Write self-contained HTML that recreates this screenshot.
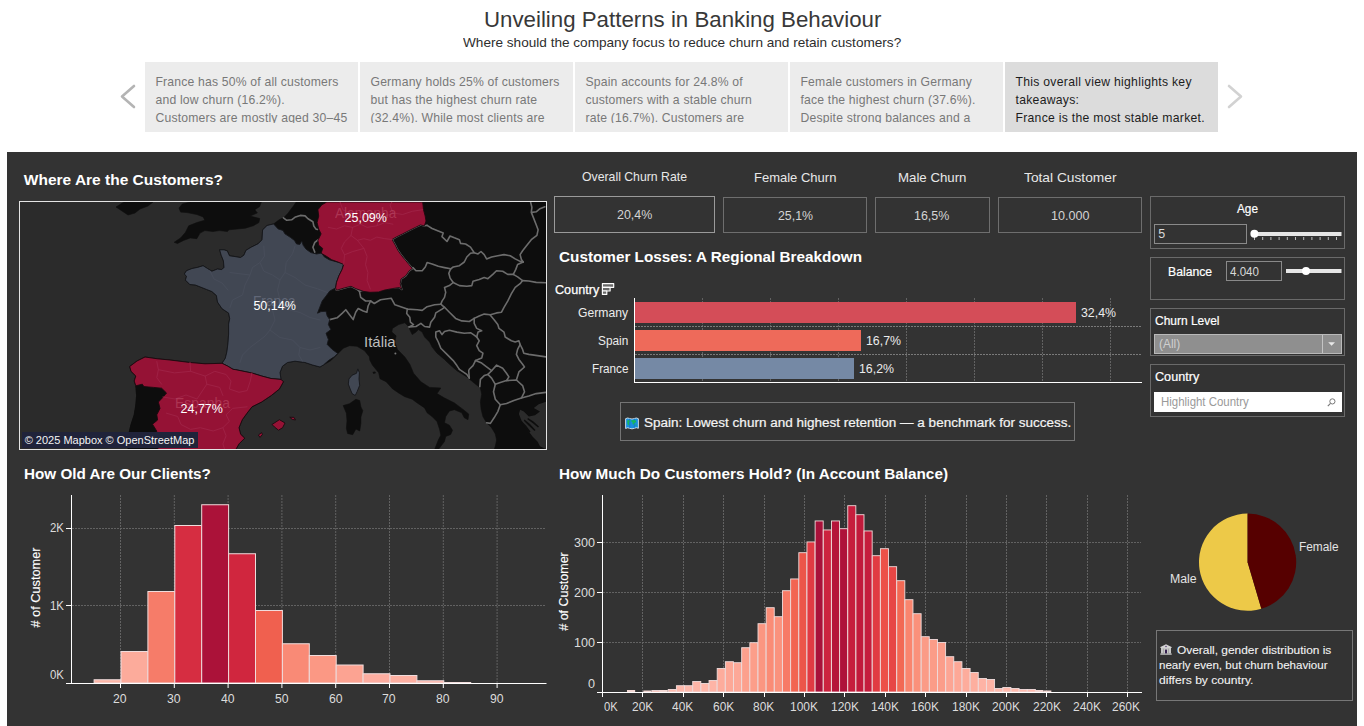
<!DOCTYPE html>
<html lang="en"><head><meta charset="utf-8"><title>Unveiling Patterns in Banking Behaviour</title>
<style>
html,body{margin:0;padding:0}
body{width:1364px;height:726px;position:relative;overflow:hidden;background:#fff;font-family:"Liberation Sans",sans-serif}
.abs{position:absolute}
.t{position:absolute;white-space:nowrap;line-height:1;margin:0}
.story{position:absolute;top:62px;width:213px;height:69.5px;background:#ececec;overflow:hidden;color:#787878}
.story.act{background:#dcdcdc;color:#1c1c1c}
.story .sl{position:absolute;left:10.5px;white-space:nowrap;font-size:12.2px;line-height:1;letter-spacing:0.18px}
.story:before{content:"";position:absolute;left:0;right:0;top:60.5px;height:9px;background:inherit;z-index:2}
#dash{position:absolute;left:7px;top:152px;width:1350px;height:574px;background:#333}
.box{position:absolute;box-sizing:border-box;border:1px solid #707070}
</style></head>
<body>
<div class="t" style="font-size:22px;color:#383838;left:483.70px;top:9.00px;transform:scaleX(1.0121);transform-origin:0 0;">Unveiling Patterns in Banking Behaviour</div>
<div class="t" style="font-size:13.3px;color:#2e2e2e;left:462.80px;top:36.00px;transform:scaleX(1.0222);transform-origin:0 0;">Where should the company focus to reduce churn and retain customers?</div>
<svg class="abs" style="left:116px;top:80px" width="24" height="34" viewBox="116 80 24 34"><path d="M134 86 L122 96.5 L134 107" fill="none" stroke="#b4b4b4" stroke-width="2.6" stroke-linecap="round" stroke-linejoin="round"/></svg>
<svg class="abs" style="left:1222px;top:80px" width="24" height="34" viewBox="1222 80 24 34"><path d="M1229 86 L1241 96.5 L1229 107" fill="none" stroke="#d2d2d2" stroke-width="2.6" stroke-linecap="round" stroke-linejoin="round"/></svg>
<div class="story" style="left:145px">
<div class="sl" style="top:14.00px">France has 50% of all customers</div>
<div class="sl" style="top:32.00px">and low churn (16.2%).</div>
<div class="sl" style="top:50.00px">Customers are mostly aged 30–45</div>
</div>
<div class="story" style="left:360px">
<div class="sl" style="top:14.00px">Germany holds 25% of customers</div>
<div class="sl" style="top:32.00px">but has the highest churn rate</div>
<div class="sl" style="top:50.00px">(32.4%). While most clients are</div>
</div>
<div class="story" style="left:575px">
<div class="sl" style="top:14.00px">Spain accounts for 24.8% of</div>
<div class="sl" style="top:32.00px">customers with a stable churn</div>
<div class="sl" style="top:50.00px">rate (16.7%). Customers are</div>
</div>
<div class="story" style="left:790px">
<div class="sl" style="top:14.00px">Female customers in Germany</div>
<div class="sl" style="top:32.00px">face the highest churn (37.6%).</div>
<div class="sl" style="top:50.00px">Despite strong balances and a</div>
</div>
<div class="story act" style="left:1005px">
<div class="sl" style="top:14.00px;letter-spacing:0.28px">This overall view highlights key</div>
<div class="sl" style="top:32.00px;letter-spacing:0.28px">takeaways:</div>
<div class="sl" style="top:50.00px;letter-spacing:0.28px">France is the most stable market.</div>
</div>
<div id="dash"></div>
<div class="t" style="font-size:15.5px;color:#ffffff;font-weight:700;left:23.80px;top:172.00px;">Where Are the Customers?</div>
<div class="abs" style="left:19px;top:201px;width:528px;height:249px;box-sizing:border-box;border:1px solid #e4e4e4;background:#2b2b2b;overflow:hidden">
<svg class="abs" style="left:-1px;top:-1px" width="528" height="250" viewBox="19 201 528 250">
<g fill="#0d0d0d" stroke="#0d0d0d" stroke-width="0.6" stroke-linejoin="round">
<polygon points="296.5,201.5 546.5,201.5 546.5,449.5 494.1,449.5 495.3,446.3 496.6,440.1 495.3,433.9 491.6,427.7 486.6,422.8 482.9,416.6 481.1,409.1 480.4,401.7 481.7,394.2 480.4,388.0 474.2,383.1 466.8,376.9 456.9,370.7 452.0,366.5 447.0,362.0 444.5,359.4 437.0,353.2 432.1,347.0 429.6,342.0 424.6,337.0 422.2,332.1 418.4,329.6 416.0,332.1 412.2,334.6 409.8,329.6 409.1,326.9 404.8,322.8 398.6,324.6 392.4,328.4 391.8,332.1 396.1,335.8 394.9,342.0 397.4,349.4 404.8,356.9 409.8,364.3 412.2,369.9 413.5,373.2 420.9,381.8 429.6,387.4 440.8,388.0 437.0,393.6 444.5,398.0 454.4,402.9 464.3,410.4 468.7,414.1 468.0,419.7 464.3,417.8 461.8,412.8 454.4,409.7 449.4,411.0 445.7,416.6 444.5,422.8 449.4,425.2 452.5,430.2 450.7,434.5 445.7,436.4 444.5,441.4 440.8,446.3 438.3,449.5 434.6,449.5 438.3,440.1 440.8,435.2 439.5,429.0 437.0,421.5 432.1,416.6 427.1,412.8 424.6,407.9 417.2,402.9 412.2,399.2 404.8,396.7 398.6,393.0 392.4,388.7 386.2,381.8 380.0,378.7 378.7,372.7 372.4,365.1 369.8,360.0 369.4,356.8 364.4,350.6 357.0,346.3 349.5,345.7 343.3,348.2 337.1,354.4 330.9,360.6 323.5,364.9 320.0,367.0 312.5,365.0 305.0,362.5 295.0,361.2 287.5,362.5 282.5,366.2 280.0,372.5 281.0,379.4 283.4,381.8 279.4,389.0 271.3,395.5 261.6,402.0 252.0,406.8 247.0,413.2 242.3,419.7 239.0,427.7 240.6,434.2 244.7,438.2 239.0,443.9 235.8,449.5 128.0,449.5 129.4,431.0 131.0,424.5 134.2,414.8 135.8,405.0 136.6,395.5 135.8,385.8 134.2,381.0 135.8,376.0 131.0,371.3 129.7,366.5 137.0,361.0 145.0,357.0 157.5,358.8 170.0,360.0 190.0,362.5 205.0,363.8 222.0,363.3 225.3,358.3 226.9,351.7 228.0,342.9 228.6,334.1 228.6,324.2 229.7,318.7 228.6,313.1 222.0,308.7 217.5,302.1 216.4,295.5 211.9,291.6 206.4,289.4 200.9,287.2 195.3,285.0 189.8,284.5 185.4,280.1 186.5,276.2 184.3,274.0 186.5,270.7 192.0,268.5 197.5,267.4 203.1,265.7 207.5,268.5 211.9,271.2 217.4,269.0 221.8,269.6 224.0,267.4 223.4,260.8 221.2,255.3 219.6,249.8 224.0,249.8 227.3,250.9 229.5,255.8 233.9,256.4 240.5,257.5 243.8,255.3 246.0,250.3 251.5,247.0 258.2,243.7 262.0,239.8 262.6,229.9 267.0,225.5 273.6,223.9 279.1,219.8 283.9,217.4 287.8,213.5 290.7,209.6 293.6,205.8 296.5,201.5"/>
<polygon points="179.0,208.0 182.3,204.0 190.3,202.0 261.3,202.0 259.7,206.5 254.8,209.7 257.3,212.9 250.0,216.1 259.7,218.5 258.9,222.6 253.2,225.8 245.2,228.2 237.1,229.0 229.0,229.8 227.4,231.5 219.4,230.6 212.9,231.5 204.8,230.6 200.0,233.1 196.8,238.7 190.3,237.9 183.9,240.3 177.4,243.5 174.2,242.3 180.6,237.9 185.5,232.3 188.7,225.8 196.8,222.6 204.8,220.2 203.2,216.9 196.8,214.5 187.1,212.6 180.6,212.1"/>
<polygon points="116.0,207.0 124.0,202.0 153.0,202.0 148.0,206.0 140.0,209.0 135.0,213.0 128.0,215.0 122.0,211.0"/>
<polygon points="343.2,405.6 349.5,403.7 355.9,399.3 359.7,400.5 360.9,406.9 362.8,410.7 360.9,417.0 360.9,423.3 359.7,431.0 355.9,429.0 352.7,434.7 347.6,433.5 346.4,428.4 347.0,420.8 346.4,413.2 344.5,408.8"/>
<polygon points="128.0,449.5 129.4,431.0 131.0,424.5 134.2,414.8 135.8,405.0 136.6,395.5 135.8,385.8 142.3,384.2 143.9,386.6 153.5,387.4 161.6,388.2 166.5,393.0 163.2,397.0 158.4,402.0 160.0,408.4 156.8,414.8 157.6,420.0 152.5,424.2 156.7,431.0 156.5,440.0 158.0,449.5"/>
</g>
<polygon points="546.5,401.7 538.7,404.2 533.8,407.9 540.0,411.6 535.0,415.3 528.8,416.6 523.8,411.6 520.1,409.7 518.9,414.1 521.4,420.3 525.1,426.5 528.8,431.4 532.5,436.4 537.5,441.4 540.0,446.3 546.5,449.5" fill="#2b2b2b"/>
<g fill="none" stroke="#6c6c6c" stroke-width="1.6" stroke-linejoin="round" stroke-linecap="round">
<polyline points="283.4,217.8 286.8,220.3 291.6,219.8 295.5,216.9 300.3,215.4 305.1,215.9 308.0,218.8 312.9,221.7 313.8,226.0 315.8,228.9 317.5,229.5"/>
<polyline points="318.6,239.5 314.8,242.4 312.9,247.3 314.8,252.1"/>
<polyline points="427.1,225.4 432.1,228.5 438.3,231.0 443.2,232.9 442.0,236.6 447.0,241.5 450.0,236.0 454.4,237.8 459.4,239.7 460.6,243.4 465.6,244.0 470.5,247.1 474.2,252.7 478.0,253.9 481.0,251.5 484.2,254.6 486.6,258.9 491.6,257.0 497.8,255.8 504.0,254.6 510.2,255.8 515.2,258.9 520.1,261.4 523.2,262.0"/>
<polyline points="530.7,202.5 531.9,207.4 531.3,212.4 533.8,218.6 536.2,224.8 538.1,229.8 536.9,235.3 531.3,239.7 526.3,245.9 522.6,250.8 520.1,254.6 521.4,259.5 523.2,262.0"/>
<polyline points="531.9,212.4 536.2,211.8 540.0,208.7 544.9,206.8"/>
<polyline points="474.2,252.7 470.5,253.3 466.8,257.0 464.3,262.0 459.4,265.7 453.2,267.0 450.7,268.8"/>
<polyline points="412.9,267.6 416.0,270.7 422.2,270.7 425.3,267.0 427.1,262.6 432.1,263.9 438.3,266.3 444.5,267.6 450.7,268.8"/>
<polyline points="450.7,268.8 448.8,273.2 450.1,278.1 453.2,282.5 449.4,285.6 444.5,287.4 445.7,292.4 444.5,297.4 442.0,301.1 440.8,304.2"/>
<polyline points="453.2,282.5 459.4,285.6 466.8,286.2 471.8,285.6 473.0,281.2 479.2,279.4 484.2,277.5 487.9,278.7 492.8,274.4 496.5,270.7 502.7,271.3 507.7,274.4 513.3,274.4"/>
<polyline points="523.2,262.0 517.6,264.5 515.8,269.4 513.3,274.4"/>
<polyline points="513.3,274.4 517.6,276.9 522.6,280.6 520.1,283.7 515.2,287.4 511.4,293.6 507.7,301.1 504.0,307.3 501.5,312.2 496.6,312.9 490.4,314.7 484.2,314.1 479.2,316.0 474.2,318.4"/>
<polyline points="522.6,280.6 528.8,281.0 536.2,282.4 546.0,282.8"/>
<polyline points="370.6,301.0 374.3,303.5 380.5,299.8 391.2,298.2 394.9,304.8 407.3,309.1 417.2,309.8 422.2,310.4 427.1,306.7 434.6,304.8 440.8,304.2"/>
<polyline points="440.8,304.2 444.5,307.3 449.4,312.2 455.6,318.4 461.8,320.9 469.3,321.5 474.2,318.4"/>
<polyline points="490.4,315.3 494.1,319.7 497.8,324.6 499.0,328.4 504.0,332.1 505.2,337.0 511.4,340.8 515.2,342.0 518.9,340.8 520.1,344.5"/>
<polyline points="520.1,344.5 522.6,349.4 523.8,353.2 528.8,354.4 537.5,355.6 546.0,356.9"/>
<polyline points="520.1,344.5 517.6,349.4 516.4,354.4 518.9,359.4 522.6,364.3 524.5,367.0 518.9,371.9 516.4,380.0"/>
<polyline points="407.3,309.1 406.7,313.5 409.8,317.2 410.4,322.2 413.5,324.6 409.1,326.9"/>
<polyline points="409.1,326.9 416.0,326.5 420.9,323.4 424.6,326.5 429.6,327.1 430.8,322.2 434.6,317.2 435.8,312.9 442.0,309.1 444.5,307.3"/>
<polyline points="459.4,369.4 456.9,365.6 453.2,360.6 447.0,354.4 440.8,348.2 438.3,342.0 435.8,337.0 435.8,332.1 439.5,330.8 442.0,334.6 444.5,331.5 449.4,330.2 456.9,332.1 464.3,333.3 470.5,332.7 474.2,335.2 476.7,337.0"/>
<polyline points="474.2,318.4 474.2,323.4 476.7,328.4 481.7,330.8 478.0,332.1 476.7,337.0"/>
<polyline points="476.7,337.0 479.2,340.8 476.7,345.7 479.2,350.7 482.9,353.2 481.7,358.1 475.5,360.6 473.0,365.6 469.3,369.3 468.7,370.7 469.3,378.1"/>
<polyline points="459.4,369.4 466.8,374.4 469.3,378.1"/>
<polyline points="475.5,360.6 481.7,363.1 486.6,366.8 491.6,370.7 487.9,374.4 484.2,375.6 480.4,379.4 479.8,386.8"/>
<polyline points="491.6,370.7 496.6,365.1 502.7,368.2 506.5,373.2 508.9,376.9 506.5,380.6 500.3,382.5 495.3,384.3 491.6,378.1 487.9,374.4"/>
<polyline points="495.3,384.3 493.5,391.8 495.3,399.2 500.3,404.8 497.8,411.6 494.1,417.8 490.4,423.4 486.6,422.8"/>
<polyline points="506.5,380.6 516.4,380.0 522.6,385.6 524.5,391.8 521.4,398.0 513.9,400.4 506.5,403.5 500.3,404.8"/>
<polyline points="521.4,398.0 528.8,396.1 536.2,393.6 546.0,392.4"/>
<polyline points="329.7,319.6 337.1,317.8 342.1,313.4 345.8,309.7 349.5,314.7 353.2,319.6 355.7,312.2 358.2,308.5 363.2,311.0 366.9,312.2 368.1,306.0 370.6,301.0"/>
<polyline points="359.4,291.1 360.7,297.3 365.6,301.0 370.6,301.0"/>
<polyline points="335.9,288.6 336.5,290.3 344.5,287.9 351.0,286.3 355.8,288.7 359.4,291.1"/>
<polyline points="359.4,291.1 363.9,290.3 371.9,289.0 378.4,291.1 384.8,288.7 392.9,287.9 399.4,287.1 401.8,289.5 400.2,283.9 401.0,279.0 405.8,275.8 409.0,271.0 412.3,268.5"/>
<polyline points="412.3,268.5 409.0,264.5 405.0,259.7 401.0,254.8 397.7,250.0 395.3,245.2 392.1,239.5 396.1,237.1 402.6,233.9 409.0,230.6 415.5,227.4 420.3,225.0 424.4,225.8 427.1,225.4"/>
</g>
<g fill="#0d0d0d">
<polygon points="521.5,421.0 526.0,425.5 530.5,431.5 529.5,432.5 524.5,427.5 520.8,422.5"/>
<polygon points="524.5,419.5 530.0,424.0 535.5,430.0 534.5,431.0 528.5,425.5 523.8,420.8"/>
<polygon points="528.0,418.0 533.5,421.5 539.0,426.5 538.0,427.5 532.5,423.0 527.3,419.3"/>
<polygon points="372.5,372.0 375.0,371.5 376.0,373.0 373.5,374.0"/>
</g>
<g fill="#414753" stroke="#15161a" stroke-width="0.9" stroke-linejoin="round"><polygon points="273.6,223.9 278.1,228.9 283.0,230.4 284.9,233.8 290.7,237.6 294.5,240.5 296.5,243.9 299.8,244.4 301.8,241.0 303.2,245.3 306.1,249.2 310.9,252.6 316.7,254.0 321.5,253.0 324.4,256.9 329.3,259.8 336.0,261.7 343.7,263.6 342.1,269.4 338.9,275.8 336.5,282.3 335.6,287.9 329.7,291.1 326.0,296.1 322.2,301.0 319.8,307.2 317.5,313.2 321.0,311.6 326.0,311.3 327.2,315.9 329.7,319.6 328.4,324.6 330.9,329.6 326.0,333.3 328.4,339.5 327.2,344.4 332.2,349.4 337.7,353.4 334.6,356.6 328.4,360.6 323.5,364.9 320.0,367.0 312.5,365.0 305.0,362.5 295.0,361.2 287.5,362.5 282.5,366.2 280.0,372.5 281.0,379.4 271.0,378.5 261.6,376.0 252.0,373.0 235.8,369.7 233.0,369.3 227.5,366.0 222.0,363.3 225.3,358.3 226.9,351.7 228.0,342.9 228.6,334.1 228.6,324.2 229.7,318.7 228.6,313.1 222.0,308.7 217.5,302.1 216.4,295.5 211.9,291.6 206.4,289.4 200.9,287.2 195.3,285.0 189.8,284.5 185.4,280.1 186.5,276.2 184.3,274.0 186.5,270.7 192.0,268.5 197.5,267.4 203.1,265.7 207.5,268.5 211.9,271.2 217.4,269.0 221.8,269.6 224.0,267.4 223.4,260.8 221.2,255.3 219.6,249.8 224.0,249.8 227.3,250.9 229.5,255.8 233.9,256.4 240.5,257.5 243.8,255.3 246.0,250.3 251.5,247.0 258.2,243.7 262.0,239.8 262.6,229.9 267.0,225.5"/><polygon points="357.8,368.9 359.4,372.7 359.0,379.0 359.7,385.3 357.1,391.7 355.2,395.5 352.1,393.6 350.2,389.1 348.3,384.1 348.9,379.0 352.1,375.2 356.5,373.3"/></g>
<g fill="none" stroke="#484e5b" stroke-width="0.9" stroke-linejoin="round" stroke-linecap="round">
<polyline points="263.8,246.2 264.5,256.2 260.0,262.5 263.8,271.2 272.5,275.0 280.0,280.0 285.0,272.5 286.2,262.5 292.5,253.8 295.0,246.2"/>
<polyline points="280.0,280.0 277.5,290.0 280.0,300.0 272.5,310.0 275.0,320.0 270.0,330.0 265.0,336.2 260.0,340.0"/>
<polyline points="230.0,272.5 240.0,273.8 250.0,275.0 252.5,267.5 260.0,262.5"/>
<polyline points="250.0,275.0 245.0,285.0 242.5,295.0 232.5,300.0 230.0,307.5"/>
<polyline points="285.0,272.5 295.0,277.5 305.0,285.0 317.5,288.8 327.5,292.5"/>
<polyline points="280.0,300.0 290.0,310.0 300.0,312.5 310.0,317.5 320.0,320.0"/>
<polyline points="270.0,330.0 280.0,337.5 292.5,340.0 300.0,347.5 310.0,350.0 320.0,347.5"/>
<polyline points="260.0,340.0 250.0,347.5 242.5,355.0 240.0,362.5"/>
<polyline points="300.0,347.5 298.8,355.0 302.5,361.2"/>
<polyline points="210.0,271.0 214.0,279.0 222.0,283.0 228.0,290.0"/>
</g>
<g fill="#951235" stroke="#1a0a0e" stroke-width="0.9" stroke-linejoin="round"><polygon points="326.8,202.0 321.9,204.8 317.9,209.7 318.7,216.1 317.1,222.6 318.7,229.0 321.1,233.9 317.9,240.3 318.7,245.2 322.7,248.4 321.1,253.2 326.8,256.5 331.6,259.7 338.1,262.1 343.7,264.5 342.1,269.4 338.9,275.8 336.5,282.3 335.6,287.9 336.5,290.3 344.5,287.9 351.0,286.3 355.8,288.7 363.9,291.5 370.0,292.3 378.4,292.0 384.8,290.0 392.9,288.5 399.4,287.5 401.8,289.5 400.2,283.9 401.0,279.0 405.8,275.8 409.0,271.0 412.3,268.5 409.0,264.5 405.0,259.7 401.0,254.8 397.7,250.0 395.3,245.2 392.1,239.5 396.1,237.1 402.6,233.9 409.0,230.6 415.5,227.4 420.3,225.0 424.4,225.8 426.0,221.0 425.2,216.1 423.5,209.7 422.7,202.0"/><polygon points="134.2,381.0 135.8,376.0 131.0,371.3 129.7,366.5 137.0,361.0 145.0,357.0 157.5,358.8 170.0,360.0 190.0,362.5 205.0,363.8 222.0,363.3 227.5,366.0 233.0,369.3 235.8,369.7 252.0,373.0 261.6,376.0 271.0,378.5 281.0,379.4 283.4,381.8 279.4,389.0 271.3,395.5 261.6,402.0 252.0,406.8 247.0,413.2 242.3,419.7 239.0,427.7 240.6,434.2 244.7,438.2 239.0,443.9 235.8,449.5 158.0,449.5 156.5,440.0 156.7,431.0 152.5,424.2 157.6,420.0 156.8,414.8 160.0,408.4 158.4,402.0 163.2,397.0 166.5,393.0 161.6,388.2 153.5,387.4 143.9,386.6 142.3,384.2 135.8,385.8"/><polygon points="272.0,424.5 279.4,419.7 285.0,423.0 282.6,427.7 278.5,430.2 274.5,427.0"/><polygon points="289.8,417.3 293.9,417.3 295.5,420.0 292.3,419.4"/><polygon points="258.4,435.0 261.6,432.6 262.4,434.5 260.0,437.4"/></g>
<g fill="none" stroke="#9f2346" stroke-width="0.9" stroke-linejoin="round" stroke-linecap="round">
<polyline points="328.4,227.4 336.5,229.0 344.5,225.8 352.6,227.4 360.6,224.2 367.1,227.4 376.8,225.8 384.8,222.6 392.9,224.2"/>
<polyline points="352.6,227.4 351.0,235.5 344.5,241.9 341.3,248.4 344.5,254.8 343.7,264.5"/>
<polyline points="351.0,235.5 357.4,240.3 363.9,238.7 370.3,240.3 376.8,237.1 384.8,238.7 392.1,239.5"/>
<polyline points="363.9,248.4 367.1,256.5 365.5,264.5 367.9,272.6 367.1,280.6 370.3,289.0"/>
<polyline points="344.5,254.8 352.6,251.6 363.9,248.4 357.4,240.3"/>
<polyline points="392.9,212.9 402.6,214.5 412.3,211.3 422.7,209.7"/>
<polyline points="376.8,225.8 380.0,217.7 389.7,214.5 392.9,212.9 390.0,205.0 392.0,202.0"/>
<polyline points="340.0,202.0 343.0,210.0 352.0,213.0 360.6,224.2"/>
<polyline points="156.8,361.6 158.4,369.7 156.8,377.7 161.6,384.2"/>
<polyline points="158.4,369.7 174.5,372.9 190.6,371.3 205.2,376.1 206.8,384.2 219.7,387.4 222.9,395.5"/>
<polyline points="205.2,376.1 214.8,371.3 226.1,374.5 231.0,381.0 229.4,389.0 239.0,392.3 247.1,390.6 250.3,381.0 251.9,372.9"/>
<polyline points="166.5,413.2 177.7,416.5 181.0,424.5 190.6,429.4 200.3,427.7 213.2,431.0 222.9,427.7 229.4,421.3 226.1,414.8 232.6,408.4 247.1,406.8"/>
<polyline points="222.9,427.7 226.1,435.8 222.9,443.9 224.5,449.0"/>
<polyline points="163.0,397.0 175.0,399.0 186.0,395.0 197.0,399.0 206.8,384.2"/>
<polyline points="190.6,371.3 190.0,362.5"/>
</g>
<circle cx="395.4" cy="353.4" r="1" fill="#777"/>
</svg>
<div class="abs" style="left:2px;top:230px;width:176px;height:16px;background:#20233a"></div>
</div>
<div class="t" style="font-size:15px;color:#c0506b;opacity:0.55;left:334.80px;top:205.00px;transform:scaleX(0.9060);transform-origin:0 0;">Alemanha</div>
<div class="t" style="font-size:14.5px;color:#6a7080;opacity:0.8;left:253.40px;top:294.00px;transform:scaleX(0.9437);transform-origin:0 0;">França</div>
<div class="t" style="font-size:15px;color:#c0506b;opacity:0.55;left:174.50px;top:395.00px;transform:scaleX(0.9271);transform-origin:0 0;">Espanha</div>
<div class="t" style="font-size:14.5px;color:#bdbdbd;left:363.80px;top:335.00px;transform:scaleX(1.0313);transform-origin:0 0;">Itália</div>
<div class="t" style="font-size:12.5px;color:#fff;left:344.50px;top:212.00px;">25,09%</div>
<div class="t" style="font-size:12.5px;color:#fff;left:253.40px;top:300.00px;">50,14%</div>
<div class="t" style="font-size:12.5px;color:#fff;left:180.50px;top:403.00px;">24,77%</div>
<div class="t" style="font-size:11px;color:#f4f4f4;left:24.70px;top:435.00px;">© 2025 Mapbox © OpenStreetMap</div>
<div class="t" style="font-size:13px;color:#e8e8e8;left:582.00px;top:170.00px;transform:scaleX(0.9436);transform-origin:0 0;">Overall Churn Rate</div>
<div class="t" style="font-size:13px;color:#e8e8e8;left:754.00px;top:171.00px;">Female Churn</div>
<div class="t" style="font-size:13px;color:#e8e8e8;left:898.25px;top:171.00px;transform:scaleX(1.0193);transform-origin:0 0;">Male Churn</div>
<div class="t" style="font-size:13px;color:#e8e8e8;left:1023.75px;top:171.00px;transform:scaleX(1.0581);transform-origin:0 0;">Total Customer</div>
<div class="box" style="left:554px;top:196px;width:161px;height:37px;border-color:#9a9a9a;"></div>
<div class="box" style="left:723px;top:197px;width:144px;height:36px;border-color:#6e6e6e;"></div>
<div class="box" style="left:875px;top:197px;width:115px;height:36px;border-color:#6e6e6e;"></div>
<div class="box" style="left:998px;top:197px;width:144px;height:36px;border-color:#6e6e6e;"></div>
<div class="t" style="font-size:12.5px;color:#d4d4d4;left:616.50px;top:209.00px;transform:scaleX(0.9943);transform-origin:0 0;">20,4%</div>
<div class="t" style="font-size:12.5px;color:#d4d4d4;left:777.50px;top:210.00px;transform:scaleX(0.9872);transform-origin:0 0;">25,1%</div>
<div class="t" style="font-size:12.5px;color:#d4d4d4;left:914.25px;top:210.00px;transform:scaleX(0.9943);transform-origin:0 0;">16,5%</div>
<div class="t" style="font-size:12.5px;color:#d4d4d4;left:1050.50px;top:210.00px;transform:scaleX(1.0069);transform-origin:0 0;">10.000</div>
<div class="t" style="font-size:15.5px;color:#ffffff;font-weight:700;left:558.50px;top:249.00px;transform:scaleX(0.9863);transform-origin:0 0;">Customer Losses: A Regional Breakdown</div>
<div class="t" style="font-size:12.5px;color:#ffffff;-webkit-text-stroke:0.25px #ffffff;left:554.50px;top:284.00px;transform:scaleX(1.0107);transform-origin:0 0;">Country</div>
<svg class="abs" style="left:601px;top:282px" width="15" height="15" viewBox="601 282 15 15"><g fill="#6a6a6a" stroke="#fff" stroke-width="1.15" stroke-linejoin="round"><rect x="602.4" y="283.6" width="11.3" height="3.7"/><rect x="602.4" y="287.3" width="7.7" height="3.7"/><rect x="602.4" y="291" width="4.4" height="3.4"/></g></svg>
<svg class="abs" style="left:550px;top:296px" width="596" height="92" viewBox="550 296 596 92">
<line x1="702.5" y1="298" x2="702.5" y2="382" stroke="#626262" stroke-width="1" stroke-dasharray="2 1"/>
<line x1="770.5" y1="298" x2="770.5" y2="382" stroke="#626262" stroke-width="1" stroke-dasharray="2 1"/>
<line x1="838.5" y1="298" x2="838.5" y2="382" stroke="#626262" stroke-width="1" stroke-dasharray="2 1"/>
<line x1="906.5" y1="298" x2="906.5" y2="382" stroke="#626262" stroke-width="1" stroke-dasharray="2 1"/>
<line x1="974.5" y1="298" x2="974.5" y2="382" stroke="#626262" stroke-width="1" stroke-dasharray="2 1"/>
<line x1="1042.5" y1="298" x2="1042.5" y2="382" stroke="#626262" stroke-width="1" stroke-dasharray="2 1"/>
<line x1="1110.5" y1="298" x2="1110.5" y2="382" stroke="#626262" stroke-width="1" stroke-dasharray="2 1"/>
<line x1="635" y1="326.5" x2="1142" y2="326.5" stroke="#7a7a7a" stroke-width="1" stroke-dasharray="2 1"/>
<line x1="635" y1="354.5" x2="1142" y2="354.5" stroke="#7a7a7a" stroke-width="1" stroke-dasharray="2 1"/>
<rect x="635" y="302" width="441" height="21" fill="#d44d58"/>
<rect x="635" y="330" width="226" height="21" fill="#ee6a5a"/>
<rect x="635" y="358" width="219" height="21" fill="#7589a5"/>
<line x1="634.5" y1="298" x2="634.5" y2="383" stroke="#fff" stroke-width="1"/>
<line x1="634" y1="382.5" x2="1142" y2="382.5" stroke="#fff" stroke-width="1"/>
</svg>
<div class="t" style="font-size:12.5px;color:#ececec;left:578.25px;top:307.00px;transform:scaleX(0.9726);transform-origin:0 0;">Germany</div>
<div class="t" style="font-size:12.5px;color:#ececec;left:598.00px;top:335.00px;transform:scaleX(0.9458);transform-origin:0 0;">Spain</div>
<div class="t" style="font-size:12.5px;color:#ececec;left:591.75px;top:363.00px;transform:scaleX(0.9382);transform-origin:0 0;">France</div>
<div class="t" style="font-size:12.5px;color:#ececec;left:1080.50px;top:307.00px;transform:scaleX(0.9872);transform-origin:0 0;">32,4%</div>
<div class="t" style="font-size:12.5px;color:#ececec;left:865.50px;top:335.00px;transform:scaleX(0.9872);transform-origin:0 0;">16,7%</div>
<div class="t" style="font-size:12.5px;color:#ececec;left:858.50px;top:363.00px;transform:scaleX(0.9872);transform-origin:0 0;">16,2%</div>
<div class="box" style="left:620px;top:402px;width:455px;height:39px;border-color:#747474;"></div>
<svg class="abs" style="left:624.9px;top:416.6px" width="14" height="13" viewBox="0 0 14 13"><path d="M0.6 1.7 Q2.6 0.4 4.7 1.5 Q7 2.5 9.3 1.5 Q11.4 0.4 13.4 1.7 V11.3 Q11.4 10.1 9.3 11.3 Q7 12.4 4.7 11.3 Q2.6 10.1 0.6 11.5 Z" fill="#1b8fdd" stroke="#eef6fb" stroke-width="0.8" stroke-linejoin="round"/><path d="M4.7 1.6 V11.2 M9.3 1.6 V11.2" stroke="#0f6fb8" stroke-width="0.6" fill="none"/><path d="M2.2 3.6 L4 3 L4.8 4.4 L3.8 5.4 L4.2 7.4 L3.2 8.6 L2.4 6.6 Z M6 3.4 L8.6 2.9 L10.8 3.6 L11.2 5.2 L9.6 5.8 L8.6 7.8 L7.4 6.6 L7.6 5 L6.2 4.6 Z M10.4 7.6 L11.6 7.4 L11.4 8.8 L10.4 8.8 Z" fill="#16b85c"/></svg>
<div class="t" style="font-size:12.5px;color:#f4f4f4;-webkit-text-stroke:0.2px #f4f4f4;left:643.75px;top:417.00px;transform:scaleX(1.0807);transform-origin:0 0;">Spain: Lowest churn and highest retention — a benchmark for success.</div>
<div class="box" style="left:1150px;top:196px;width:195px;height:53px;border-color:#6a6a6a;"></div>
<div class="t" style="font-size:12.5px;color:#ffffff;-webkit-text-stroke:0.2px #ffffff;left:1237.20px;top:203.00px;transform:scaleX(0.9438);transform-origin:0 0;">Age</div>
<div class="box" style="left:1154px;top:224px;width:92.5px;height:20px;border-color:#8a8a8a;"></div>
<div class="t" style="font-size:12.5px;color:#d8d8d8;left:1158.20px;top:228.00px;">5</div>
<svg class="abs" style="left:1248px;top:226px" width="98" height="18" viewBox="1248 226 98 18"><rect x="1254" y="232" width="87.5" height="4" fill="#e6e6e6"/><line x1="1254.5" y1="237" x2="1254.5" y2="240" stroke="#e0e0e0" stroke-width="0.8"/><line x1="1262.7" y1="237" x2="1262.7" y2="240" stroke="#e0e0e0" stroke-width="0.8"/><line x1="1270.9" y1="237" x2="1270.9" y2="240" stroke="#e0e0e0" stroke-width="0.8"/><line x1="1279.1" y1="237" x2="1279.1" y2="240" stroke="#e0e0e0" stroke-width="0.8"/><line x1="1287.3" y1="237" x2="1287.3" y2="240" stroke="#e0e0e0" stroke-width="0.8"/><line x1="1295.5" y1="237" x2="1295.5" y2="240" stroke="#e0e0e0" stroke-width="0.8"/><line x1="1303.7" y1="237" x2="1303.7" y2="240" stroke="#e0e0e0" stroke-width="0.8"/><line x1="1311.9" y1="237" x2="1311.9" y2="240" stroke="#e0e0e0" stroke-width="0.8"/><line x1="1320.1" y1="237" x2="1320.1" y2="240" stroke="#e0e0e0" stroke-width="0.8"/><line x1="1328.3" y1="237" x2="1328.3" y2="240" stroke="#e0e0e0" stroke-width="0.8"/><line x1="1336.5" y1="237" x2="1336.5" y2="240" stroke="#e0e0e0" stroke-width="0.8"/><circle cx="1254.4" cy="233.8" r="4" fill="#fff"/></svg>
<div class="box" style="left:1150px;top:257px;width:195px;height:43px;border-color:#6a6a6a;"></div>
<div class="t" style="font-size:12.5px;color:#ffffff;-webkit-text-stroke:0.2px #ffffff;left:1168.10px;top:266.00px;transform:scaleX(0.9759);transform-origin:0 0;">Balance</div>
<div class="box" style="left:1226px;top:261px;width:56px;height:20px;border-color:#8a8a8a;"></div>
<div class="t" style="font-size:12.5px;color:#d8d8d8;left:1230.00px;top:266.00px;transform:scaleX(0.9271);transform-origin:0 0;">4.040</div>
<svg class="abs" style="left:1284px;top:264px" width="60" height="14" viewBox="1284 264 60 14"><rect x="1286" y="269" width="55.5" height="4" fill="#e6e6e6"/><circle cx="1306" cy="271" r="4" fill="#fff"/></svg>
<div class="box" style="left:1150px;top:308px;width:195px;height:48px;border-color:#6a6a6a;"></div>
<div class="t" style="font-size:12.5px;color:#ffffff;-webkit-text-stroke:0.2px #ffffff;left:1154.50px;top:315.00px;transform:scaleX(0.9569);transform-origin:0 0;">Churn Level</div>
<div class="abs" style="left:1154px;top:334px;width:187.5px;height:20px;box-sizing:border-box;background:#8f8f8f;border:1px solid #b9b9b9"></div>
<div class="abs" style="left:1322px;top:335px;width:1px;height:18px;background:#c4c4c4"></div>
<svg class="abs" style="left:1326px;top:340px" width="12" height="8" viewBox="0 0 12 8"><path d="M2.2 2.2 H9 L5.6 5.8 Z" fill="#e8e8e8"/></svg>
<div class="t" style="font-size:12.5px;color:#d0d0d0;left:1158.50px;top:338.00px;transform:scaleX(0.9541);transform-origin:0 0;">(All)</div>
<div class="box" style="left:1150px;top:364px;width:195px;height:53px;border-color:#6a6a6a;"></div>
<div class="t" style="font-size:12.5px;color:#ffffff;-webkit-text-stroke:0.2px #ffffff;left:1154.50px;top:371.00px;transform:scaleX(1.0096);transform-origin:0 0;">Country</div>
<div class="abs" style="left:1154px;top:392px;width:187.5px;height:20px;background:#fff"></div>
<div class="t" style="font-size:12px;color:#9a9a9a;left:1161.20px;top:396.00px;transform:scaleX(0.9539);transform-origin:0 0;">Highlight Country</div>
<svg class="abs" style="left:1326px;top:397px" width="11" height="11" viewBox="0 0 11 11"><circle cx="6.4" cy="4.4" r="2.6" fill="none" stroke="#777" stroke-width="1"/><path d="M4.5 6.4 L1.8 9.2" stroke="#777" stroke-width="1.1"/></svg>
<svg class="abs" style="left:1195px;top:510px" width="106" height="106" viewBox="1195 510 106 106"><path d="M1247.6 562.2 L1261.36 608.81 A48.6 48.6 0 1 1 1247.6 513.6 Z" fill="#edc948"/><path d="M1247.6 562.2 L1247.6 513.6 A48.6 48.6 0 0 1 1261.36 608.81 Z" fill="#560000"/></svg>
<div class="t" style="font-size:12.5px;color:#e4e4e4;left:1298.70px;top:541.00px;transform:scaleX(0.9499);transform-origin:0 0;">Female</div>
<div class="t" style="font-size:12.5px;color:#e4e4e4;left:1169.80px;top:573.00px;transform:scaleX(0.9855);transform-origin:0 0;">Male</div>
<div class="box" style="left:1156px;top:630px;width:197px;height:71px;border-color:#777;"></div>
<svg class="abs" style="left:1160.3px;top:644.2px" width="12" height="11" viewBox="0 0 12 11"><path d="M6 0.2 L11.6 3 V4 H0.4 V3 Z" fill="#d2d2d2"/><rect x="1" y="4" width="10" height="5.6" fill="#c6c6c6"/><rect x="0.3" y="9.4" width="11.4" height="1.4" fill="#bdbdbd"/><rect x="3.1" y="4.6" width="0.7" height="4.6" fill="#9a9a9a"/><rect x="8.2" y="4.6" width="0.7" height="4.6" fill="#9a9a9a"/><rect x="5" y="5.6" width="2" height="3.8" fill="#35204f"/><circle cx="6" cy="2.5" r="0.8" fill="#5b3f78"/></svg>
<div class="t" style="font-size:11.3px;color:#f2f2f2;-webkit-text-stroke:0.1px #f2f2f2;left:1176.70px;top:645.00px;transform:scaleX(1.0546);transform-origin:0 0;">Overall, gender distribution is</div>
<div class="t" style="font-size:11.3px;color:#f2f2f2;-webkit-text-stroke:0.1px #f2f2f2;left:1159.00px;top:660.00px;transform:scaleX(1.0246);transform-origin:0 0;">nearly even, but churn behaviour</div>
<div class="t" style="font-size:11.3px;color:#f2f2f2;-webkit-text-stroke:0.1px #f2f2f2;left:1159.00px;top:675.00px;transform:scaleX(1.0723);transform-origin:0 0;">differs by country.</div>
<div class="t" style="font-size:15.5px;color:#ffffff;font-weight:700;left:23.50px;top:466.00px;transform:scaleX(0.9845);transform-origin:0 0;">How Old Are Our Clients?</div>
<svg class="abs" style="left:14px;top:490px" width="536" height="204" viewBox="14 490 536 204">
<line x1="120.5" y1="495" x2="120.5" y2="683" stroke="#626262" stroke-width="1" stroke-dasharray="2 1"/>
<line x1="174.3" y1="495" x2="174.3" y2="683" stroke="#626262" stroke-width="1" stroke-dasharray="2 1"/>
<line x1="228.1" y1="495" x2="228.1" y2="683" stroke="#626262" stroke-width="1" stroke-dasharray="2 1"/>
<line x1="281.9" y1="495" x2="281.9" y2="683" stroke="#626262" stroke-width="1" stroke-dasharray="2 1"/>
<line x1="335.7" y1="495" x2="335.7" y2="683" stroke="#626262" stroke-width="1" stroke-dasharray="2 1"/>
<line x1="389.5" y1="495" x2="389.5" y2="683" stroke="#626262" stroke-width="1" stroke-dasharray="2 1"/>
<line x1="443.3" y1="495" x2="443.3" y2="683" stroke="#626262" stroke-width="1" stroke-dasharray="2 1"/>
<line x1="497.1" y1="495" x2="497.1" y2="683" stroke="#626262" stroke-width="1" stroke-dasharray="2 1"/>
<line x1="72" y1="528.5" x2="546" y2="528.5" stroke="#626262" stroke-width="1" stroke-dasharray="2 1"/>
<line x1="72" y1="605.5" x2="546" y2="605.5" stroke="#626262" stroke-width="1" stroke-dasharray="2 1"/>
<rect x="94.10" y="679.75" width="26.90" height="3.25" fill="#fdb6a7" stroke="#f0dcdc" stroke-width="1"/>
<rect x="121.00" y="651.50" width="26.90" height="31.50" fill="#fcab9b" stroke="#f0dcdc" stroke-width="1"/>
<rect x="147.90" y="591.50" width="26.90" height="91.50" fill="#f67c69" stroke="#f0dcdc" stroke-width="1"/>
<rect x="174.80" y="525.50" width="26.90" height="157.50" fill="#d62d41" stroke="#f0dcdc" stroke-width="1"/>
<rect x="201.70" y="504.75" width="26.90" height="178.25" fill="#ab1239" stroke="#f0dcdc" stroke-width="1"/>
<rect x="228.60" y="553.75" width="26.90" height="129.25" fill="#d0263e" stroke="#f0dcdc" stroke-width="1"/>
<rect x="255.50" y="610.50" width="26.90" height="72.50" fill="#f0604f" stroke="#f0dcdc" stroke-width="1"/>
<rect x="282.40" y="643.75" width="26.90" height="39.25" fill="#f98a76" stroke="#f0dcdc" stroke-width="1"/>
<rect x="309.30" y="655.50" width="26.90" height="27.50" fill="#fb9884" stroke="#f0dcdc" stroke-width="1"/>
<rect x="336.20" y="665.00" width="26.90" height="18.00" fill="#fca392" stroke="#f0dcdc" stroke-width="1"/>
<rect x="363.10" y="673.75" width="26.90" height="9.25" fill="#fdada0" stroke="#f0dcdc" stroke-width="1"/>
<rect x="390.00" y="675.50" width="26.90" height="7.50" fill="#fdb0a2" stroke="#f0dcdc" stroke-width="1"/>
<rect x="416.90" y="680.75" width="26.90" height="2.25" fill="#feb5a8" stroke="#f0dcdc" stroke-width="1"/>
<rect x="443.80" y="682.50" width="26.90" height="0.50" fill="#ffbcb0" stroke="#f0dcdc" stroke-width="1"/>
<line x1="71.5" y1="495" x2="71.5" y2="683.5" stroke="#fff" stroke-width="1"/>
<line x1="66" y1="683.5" x2="546.5" y2="683.5" stroke="#fff" stroke-width="1"/>
<line x1="66" y1="528.5" x2="72" y2="528.5" stroke="#fff" stroke-width="1"/>
<line x1="66" y1="605.5" x2="72" y2="605.5" stroke="#fff" stroke-width="1"/>
<line x1="120.5" y1="683" x2="120.5" y2="688" stroke="#fff" stroke-width="1"/>
<line x1="174.3" y1="683" x2="174.3" y2="688" stroke="#fff" stroke-width="1"/>
<line x1="228.1" y1="683" x2="228.1" y2="688" stroke="#fff" stroke-width="1"/>
<line x1="281.9" y1="683" x2="281.9" y2="688" stroke="#fff" stroke-width="1"/>
<line x1="335.7" y1="683" x2="335.7" y2="688" stroke="#fff" stroke-width="1"/>
<line x1="389.5" y1="683" x2="389.5" y2="688" stroke="#fff" stroke-width="1"/>
<line x1="443.3" y1="683" x2="443.3" y2="688" stroke="#fff" stroke-width="1"/>
<line x1="497.1" y1="683" x2="497.1" y2="688" stroke="#fff" stroke-width="1"/>
</svg>
<div class="t" style="font-size:12.5px;color:#dcdcdc;left:50.00px;top:522.00px;transform:scaleX(0.9152);transform-origin:0 0;">2K</div>
<div class="t" style="font-size:12.5px;color:#dcdcdc;left:50.00px;top:600.00px;transform:scaleX(0.9152);transform-origin:0 0;">1K</div>
<div class="t" style="font-size:12.5px;color:#dcdcdc;left:50.00px;top:669.00px;transform:scaleX(0.9152);transform-origin:0 0;">0K</div>
<div class="t" style="font-size:12.5px;color:#dcdcdc;left:113.40px;top:693.00px;transform:scaleX(0.9780);transform-origin:0 0;">20</div>
<div class="t" style="font-size:12.5px;color:#dcdcdc;left:167.20px;top:693.00px;transform:scaleX(0.9780);transform-origin:0 0;">30</div>
<div class="t" style="font-size:12.5px;color:#dcdcdc;left:221.00px;top:693.00px;transform:scaleX(0.9780);transform-origin:0 0;">40</div>
<div class="t" style="font-size:12.5px;color:#dcdcdc;left:274.80px;top:693.00px;transform:scaleX(0.9780);transform-origin:0 0;">50</div>
<div class="t" style="font-size:12.5px;color:#dcdcdc;left:328.60px;top:693.00px;transform:scaleX(0.9780);transform-origin:0 0;">60</div>
<div class="t" style="font-size:12.5px;color:#dcdcdc;left:382.40px;top:693.00px;transform:scaleX(0.9780);transform-origin:0 0;">70</div>
<div class="t" style="font-size:12.5px;color:#dcdcdc;left:436.20px;top:693.00px;transform:scaleX(0.9780);transform-origin:0 0;">80</div>
<div class="t" style="font-size:12.5px;color:#dcdcdc;left:490.00px;top:693.00px;transform:scaleX(0.9780);transform-origin:0 0;">90</div>
<div class="t" style="font-size:12.5px;color:#ffffff;-webkit-text-stroke:0.12px #ffffff;left:-4.26px;top:582.00px;transform:rotate(-90deg) scaleX(1.0189);transform-origin:39.26px 5.50px;"># of Customer</div>
<div class="t" style="font-size:15.5px;color:#ffffff;font-weight:700;left:558.50px;top:466.00px;transform:scaleX(0.9877);transform-origin:0 0;">How Much Do Customers Hold? (In Account Balance)</div>
<svg class="abs" style="left:550px;top:490px" width="596" height="210" viewBox="550 490 596 210">
<line x1="642.5" y1="495" x2="642.5" y2="692" stroke="#626262" stroke-width="1" stroke-dasharray="2 1"/>
<line x1="683.5" y1="495" x2="683.5" y2="692" stroke="#626262" stroke-width="1" stroke-dasharray="2 1"/>
<line x1="723.5" y1="495" x2="723.5" y2="692" stroke="#626262" stroke-width="1" stroke-dasharray="2 1"/>
<line x1="764.5" y1="495" x2="764.5" y2="692" stroke="#626262" stroke-width="1" stroke-dasharray="2 1"/>
<line x1="804.5" y1="495" x2="804.5" y2="692" stroke="#626262" stroke-width="1" stroke-dasharray="2 1"/>
<line x1="844.5" y1="495" x2="844.5" y2="692" stroke="#626262" stroke-width="1" stroke-dasharray="2 1"/>
<line x1="885.5" y1="495" x2="885.5" y2="692" stroke="#626262" stroke-width="1" stroke-dasharray="2 1"/>
<line x1="925.5" y1="495" x2="925.5" y2="692" stroke="#626262" stroke-width="1" stroke-dasharray="2 1"/>
<line x1="966.5" y1="495" x2="966.5" y2="692" stroke="#626262" stroke-width="1" stroke-dasharray="2 1"/>
<line x1="1006.5" y1="495" x2="1006.5" y2="692" stroke="#626262" stroke-width="1" stroke-dasharray="2 1"/>
<line x1="1046.5" y1="495" x2="1046.5" y2="692" stroke="#626262" stroke-width="1" stroke-dasharray="2 1"/>
<line x1="1087.5" y1="495" x2="1087.5" y2="692" stroke="#626262" stroke-width="1" stroke-dasharray="2 1"/>
<line x1="1127.5" y1="495" x2="1127.5" y2="692" stroke="#626262" stroke-width="1" stroke-dasharray="2 1"/>
<line x1="603" y1="542.5" x2="1141" y2="542.5" stroke="#626262" stroke-width="1" stroke-dasharray="2 1"/>
<line x1="603" y1="592.5" x2="1141" y2="592.5" stroke="#626262" stroke-width="1" stroke-dasharray="2 1"/>
<line x1="603" y1="642.5" x2="1141" y2="642.5" stroke="#626262" stroke-width="1" stroke-dasharray="2 1"/>
<rect x="626.98" y="690.00" width="8.16" height="2.00" fill="#f3d9d5"/>
<rect x="643.30" y="690.50" width="8.16" height="1.50" fill="#f3d9d5"/>
<rect x="651.91" y="690.45" width="8.06" height="1.55" fill="#ffbcb0" stroke="#f0dcdc" stroke-width="0.9"/>
<rect x="659.63" y="690.00" width="8.16" height="2.00" fill="#f3d9d5"/>
<rect x="668.24" y="689.45" width="8.06" height="2.55" fill="#ffbcaf" stroke="#f0dcdc" stroke-width="0.9"/>
<rect x="676.40" y="685.70" width="8.06" height="6.30" fill="#feb9ac" stroke="#f0dcdc" stroke-width="0.9"/>
<rect x="684.56" y="685.70" width="8.06" height="6.30" fill="#feb9ac" stroke="#f0dcdc" stroke-width="0.9"/>
<rect x="692.72" y="681.45" width="8.06" height="10.55" fill="#feb5a7" stroke="#f0dcdc" stroke-width="0.9"/>
<rect x="700.88" y="683.45" width="8.06" height="8.55" fill="#feb7a9" stroke="#f0dcdc" stroke-width="0.9"/>
<rect x="709.04" y="680.45" width="8.06" height="11.55" fill="#feb4a6" stroke="#f0dcdc" stroke-width="0.9"/>
<rect x="717.20" y="668.45" width="8.06" height="23.55" fill="#fdac9c" stroke="#f0dcdc" stroke-width="0.9"/>
<rect x="725.36" y="661.70" width="8.06" height="30.30" fill="#fda897" stroke="#f0dcdc" stroke-width="0.9"/>
<rect x="733.52" y="662.70" width="8.06" height="29.30" fill="#fda898" stroke="#f0dcdc" stroke-width="0.9"/>
<rect x="741.68" y="647.70" width="8.06" height="44.30" fill="#fca08d" stroke="#f0dcdc" stroke-width="0.9"/>
<rect x="749.84" y="642.70" width="8.06" height="49.30" fill="#fc9e8a" stroke="#f0dcdc" stroke-width="0.9"/>
<rect x="758.01" y="623.70" width="8.06" height="68.30" fill="#fb9681" stroke="#f0dcdc" stroke-width="0.9"/>
<rect x="766.17" y="607.70" width="8.06" height="84.30" fill="#fa8c76" stroke="#f0dcdc" stroke-width="0.9"/>
<rect x="774.33" y="616.70" width="8.06" height="75.30" fill="#fa927d" stroke="#f0dcdc" stroke-width="0.9"/>
<rect x="782.49" y="590.70" width="8.06" height="101.30" fill="#f77a66" stroke="#f0dcdc" stroke-width="0.9"/>
<rect x="790.65" y="578.95" width="8.06" height="113.05" fill="#f26552" stroke="#f0dcdc" stroke-width="0.9"/>
<rect x="798.81" y="552.70" width="8.06" height="139.30" fill="#ec5549" stroke="#f0dcdc" stroke-width="0.9"/>
<rect x="806.97" y="541.95" width="8.06" height="150.05" fill="#e03a43" stroke="#f0dcdc" stroke-width="0.9"/>
<rect x="815.13" y="520.95" width="8.06" height="171.05" fill="#a9113a" stroke="#f0dcdc" stroke-width="0.9"/>
<rect x="823.29" y="529.95" width="8.06" height="162.05" fill="#cc233f" stroke="#f0dcdc" stroke-width="0.9"/>
<rect x="831.45" y="520.95" width="8.06" height="171.05" fill="#b5153a" stroke="#f0dcdc" stroke-width="0.9"/>
<rect x="839.61" y="528.70" width="8.06" height="163.30" fill="#ae123a" stroke="#f0dcdc" stroke-width="0.9"/>
<rect x="847.77" y="505.70" width="8.06" height="186.30" fill="#c61e3d" stroke="#f0dcdc" stroke-width="0.9"/>
<rect x="855.93" y="514.70" width="8.06" height="177.30" fill="#c11a3b" stroke="#f0dcdc" stroke-width="0.9"/>
<rect x="864.10" y="530.95" width="8.06" height="161.05" fill="#c51d3c" stroke="#f0dcdc" stroke-width="0.9"/>
<rect x="872.26" y="555.70" width="8.06" height="136.30" fill="#e13b42" stroke="#f0dcdc" stroke-width="0.9"/>
<rect x="880.42" y="548.70" width="8.06" height="143.30" fill="#ec5148" stroke="#f0dcdc" stroke-width="0.9"/>
<rect x="888.58" y="566.70" width="8.06" height="125.30" fill="#e74645" stroke="#f0dcdc" stroke-width="0.9"/>
<rect x="896.74" y="580.70" width="8.06" height="111.30" fill="#f26954" stroke="#f0dcdc" stroke-width="0.9"/>
<rect x="904.90" y="599.70" width="8.06" height="92.30" fill="#f9856e" stroke="#f0dcdc" stroke-width="0.9"/>
<rect x="913.06" y="613.70" width="8.06" height="78.30" fill="#fa917b" stroke="#f0dcdc" stroke-width="0.9"/>
<rect x="921.22" y="636.70" width="8.06" height="55.30" fill="#fb9b87" stroke="#f0dcdc" stroke-width="0.9"/>
<rect x="929.38" y="639.45" width="8.06" height="52.55" fill="#fb9c88" stroke="#f0dcdc" stroke-width="0.9"/>
<rect x="937.54" y="642.45" width="8.06" height="49.55" fill="#fb9d8a" stroke="#f0dcdc" stroke-width="0.9"/>
<rect x="945.70" y="656.70" width="8.06" height="35.30" fill="#fca594" stroke="#f0dcdc" stroke-width="0.9"/>
<rect x="953.86" y="661.70" width="8.06" height="30.30" fill="#fda897" stroke="#f0dcdc" stroke-width="0.9"/>
<rect x="962.03" y="668.45" width="8.06" height="23.55" fill="#fdac9c" stroke="#f0dcdc" stroke-width="0.9"/>
<rect x="970.19" y="672.45" width="8.06" height="19.55" fill="#fdaf9f" stroke="#f0dcdc" stroke-width="0.9"/>
<rect x="978.35" y="678.45" width="8.06" height="13.55" fill="#feb3a5" stroke="#f0dcdc" stroke-width="0.9"/>
<rect x="986.51" y="679.45" width="8.06" height="12.55" fill="#feb4a6" stroke="#f0dcdc" stroke-width="0.9"/>
<rect x="994.67" y="688.45" width="8.06" height="3.55" fill="#ffbbae" stroke="#f0dcdc" stroke-width="0.9"/>
<rect x="1002.83" y="687.45" width="8.06" height="4.55" fill="#ffbaad" stroke="#f0dcdc" stroke-width="0.9"/>
<rect x="1010.99" y="688.45" width="8.06" height="3.55" fill="#ffbbae" stroke="#f0dcdc" stroke-width="0.9"/>
<rect x="1019.15" y="689.45" width="8.06" height="2.55" fill="#ffbcaf" stroke="#f0dcdc" stroke-width="0.9"/>
<rect x="1027.31" y="689.45" width="8.06" height="2.55" fill="#ffbcaf" stroke="#f0dcdc" stroke-width="0.9"/>
<rect x="1035.02" y="690.00" width="8.16" height="2.00" fill="#f3d9d5"/>
<rect x="1043.18" y="690.50" width="8.16" height="1.50" fill="#f3d9d5"/>
<line x1="602.5" y1="495" x2="602.5" y2="697" stroke="#fff" stroke-width="1"/>
<line x1="597" y1="692.5" x2="1142" y2="692.5" stroke="#fff" stroke-width="1"/>
<line x1="597" y1="542.5" x2="603" y2="542.5" stroke="#fff" stroke-width="1"/>
<line x1="597" y1="592.5" x2="603" y2="592.5" stroke="#fff" stroke-width="1"/>
<line x1="597" y1="642.5" x2="603" y2="642.5" stroke="#fff" stroke-width="1"/>
<line x1="642.5" y1="692" x2="642.5" y2="697" stroke="#fff" stroke-width="1"/>
<line x1="683.5" y1="692" x2="683.5" y2="697" stroke="#fff" stroke-width="1"/>
<line x1="723.5" y1="692" x2="723.5" y2="697" stroke="#fff" stroke-width="1"/>
<line x1="764.5" y1="692" x2="764.5" y2="697" stroke="#fff" stroke-width="1"/>
<line x1="804.5" y1="692" x2="804.5" y2="697" stroke="#fff" stroke-width="1"/>
<line x1="844.5" y1="692" x2="844.5" y2="697" stroke="#fff" stroke-width="1"/>
<line x1="885.5" y1="692" x2="885.5" y2="697" stroke="#fff" stroke-width="1"/>
<line x1="925.5" y1="692" x2="925.5" y2="697" stroke="#fff" stroke-width="1"/>
<line x1="966.5" y1="692" x2="966.5" y2="697" stroke="#fff" stroke-width="1"/>
<line x1="1006.5" y1="692" x2="1006.5" y2="697" stroke="#fff" stroke-width="1"/>
<line x1="1046.5" y1="692" x2="1046.5" y2="697" stroke="#fff" stroke-width="1"/>
<line x1="1087.5" y1="692" x2="1087.5" y2="697" stroke="#fff" stroke-width="1"/>
<line x1="1127.5" y1="692" x2="1127.5" y2="697" stroke="#fff" stroke-width="1"/>
</svg>
<div class="t" style="font-size:12.5px;color:#dcdcdc;left:574.00px;top:537.00px;transform:scaleX(1.0067);transform-origin:0 0;">300</div>
<div class="t" style="font-size:12.5px;color:#dcdcdc;left:574.00px;top:587.00px;transform:scaleX(1.0067);transform-origin:0 0;">200</div>
<div class="t" style="font-size:12.5px;color:#dcdcdc;left:574.00px;top:637.00px;transform:scaleX(1.0067);transform-origin:0 0;">100</div>
<div class="t" style="font-size:12.5px;color:#dcdcdc;left:588.00px;top:678.00px;transform:scaleX(1.0067);transform-origin:0 0;">0</div>
<div class="t" style="font-size:12.5px;color:#dcdcdc;left:604.25px;top:701.00px;transform:scaleX(0.8989);transform-origin:0 0;">0K</div>
<div class="t" style="font-size:12.5px;color:#dcdcdc;left:631.98px;top:701.00px;transform:scaleX(0.9551);transform-origin:0 0;">20K</div>
<div class="t" style="font-size:12.5px;color:#dcdcdc;left:672.38px;top:701.00px;transform:scaleX(0.9551);transform-origin:0 0;">40K</div>
<div class="t" style="font-size:12.5px;color:#dcdcdc;left:712.78px;top:701.00px;transform:scaleX(0.9551);transform-origin:0 0;">60K</div>
<div class="t" style="font-size:12.5px;color:#dcdcdc;left:753.18px;top:701.00px;transform:scaleX(0.9551);transform-origin:0 0;">80K</div>
<div class="t" style="font-size:12.5px;color:#dcdcdc;left:790.20px;top:701.00px;transform:scaleX(0.9588);transform-origin:0 0;">100K</div>
<div class="t" style="font-size:12.5px;color:#dcdcdc;left:830.60px;top:701.00px;transform:scaleX(0.9588);transform-origin:0 0;">120K</div>
<div class="t" style="font-size:12.5px;color:#dcdcdc;left:871.00px;top:701.00px;transform:scaleX(0.9588);transform-origin:0 0;">140K</div>
<div class="t" style="font-size:12.5px;color:#dcdcdc;left:911.40px;top:701.00px;transform:scaleX(0.9588);transform-origin:0 0;">160K</div>
<div class="t" style="font-size:12.5px;color:#dcdcdc;left:951.80px;top:701.00px;transform:scaleX(0.9588);transform-origin:0 0;">180K</div>
<div class="t" style="font-size:12.5px;color:#dcdcdc;left:992.20px;top:701.00px;transform:scaleX(0.9588);transform-origin:0 0;">200K</div>
<div class="t" style="font-size:12.5px;color:#dcdcdc;left:1032.60px;top:701.00px;transform:scaleX(0.9588);transform-origin:0 0;">220K</div>
<div class="t" style="font-size:12.5px;color:#dcdcdc;left:1073.00px;top:701.00px;transform:scaleX(0.9588);transform-origin:0 0;">240K</div>
<div class="t" style="font-size:12.5px;color:#dcdcdc;left:1112.00px;top:701.00px;transform:scaleX(0.9588);transform-origin:0 0;">260K</div>
<div class="t" style="font-size:12.5px;color:#ffffff;-webkit-text-stroke:0.12px #ffffff;left:523.74px;top:586.25px;transform:rotate(-90deg) ;transform-origin:39.26px 5.50px;"># of Customer</div>
</body></html>
